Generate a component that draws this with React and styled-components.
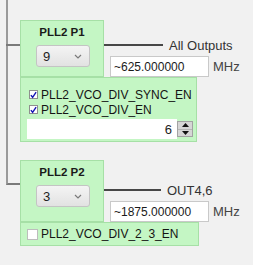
import styled, { createGlobalStyle } from "styled-components";

/* ================= STYLES ================= */

const GlobalStyle = createGlobalStyle`
  html, body {
    margin: 0;
    padding: 0;
    background: #f1f1f1;
  }
  body {
    font-family: "Liberation Sans", Arial, sans-serif;
    color: #1c1c1c;
  }
`;

const Page = styled.div`
  width: 253px;
  height: 265px;
  overflow: hidden;
  box-sizing: border-box;
  padding-left: 6px;
  display: flex;
  flex-direction: column;
`;

const Section = styled.div`
  display: flex;
`;

const Stem = styled.div`
  width: 14px;
  flex: none;
  box-sizing: border-box;
  border-left: ${(p) => (p.$last ? "none" : "2px solid #9a9a9a")};
`;

const Elbow = styled.div`
  height: ${(p) => p.$at}px;
  box-sizing: border-box;
  margin-left: ${(p) => (p.$last ? 0 : -2)}px;
  border-bottom: 2px solid #7a7a7a;
  border-left: ${(p) => (p.$last ? "2px solid #9a9a9a" : "none")};
`;

const Content = styled.div`
  display: flex;
  flex-direction: column;
  padding-top: ${(p) => p.$top || 0}px;
  padding-bottom: ${(p) => p.$bottom || 0}px;
`;

const PRow = styled.div`
  display: flex;
`;

const PBox = styled.div`
  width: 84px;
  height: ${(p) => p.$h}px;
  box-sizing: border-box;
  background: #c4f6c4;
  border: 1px solid #a6e0a6;
  display: flex;
  flex-direction: column;
  align-items: center;
  padding-top: 4px;
`;

const PTitle = styled.div`
  font-weight: bold;
  font-size: 11.5px;
  line-height: 14px;
  color: #1a1a1a;
`;

const SelectBox = styled.div`
  margin-top: 6px;
  margin-left: 2px;
  width: 54px;
  height: 22px;
  box-sizing: border-box;
  display: flex;
  align-items: center;
  justify-content: space-between;
  padding: 0 7px 0 6px;
  background: linear-gradient(#f4f4f4, #e2e2e2);
  border: 1px solid #c4c4c4;
  border-radius: 3px;
  font-size: 13px;
  color: #222;
`;

const RightCol = styled.div`
  display: flex;
  flex-direction: column;
  justify-content: flex-end;
`;

const LabelRow = styled.div`
  display: flex;
  align-items: center;
  height: 18px;
`;

const Line = styled.div`
  width: ${(p) => p.$w}px;
  height: 2px;
  background: #474747;
`;

const OutLabel = styled.span`
  margin-left: 6px;
  font-size: 13px;
  color: #333;
  white-space: nowrap;
`;

const InputRow = styled.div`
  display: flex;
  align-items: center;
  margin-top: 2px;
  margin-left: 6px;
`;

const TextInput = styled.input`
  width: 99px;
  height: 21px;
  box-sizing: border-box;
  margin: 0;
  border: 1px solid #c9c9c9;
  background: #fff;
  padding: 0 3px;
  font-family: "Liberation Sans", Arial, sans-serif;
  font-size: 12px;
  color: #1a1a1a;
  outline: none;
`;

const Unit = styled.span`
  margin-left: 4px;
  font-size: 13px;
  color: #444;
`;

const Group = styled.div`
  width: ${(p) => p.$w}px;
  box-sizing: border-box;
  background: #c4f6c4;
  border: 1px solid #a6e0a6;
  padding: ${(p) => p.$pad};
  display: flex;
  flex-direction: column;
  justify-content: center;
  height: ${(p) => (p.$h ? `${p.$h}px` : "auto")};
`;

const CheckRow = styled.div`
  display: flex;
  align-items: center;
  height: 15px;
`;

const CheckSquare = styled.span`
  width: ${(p) => p.$size}px;
  height: ${(p) => p.$size}px;
  margin-left: ${(p) => p.$ml}px;
  box-sizing: border-box;
  flex: none;
  background: #fff;
  border: 1px solid ${(p) => (p.$checked ? "#8f8f8f" : "#bdbdbd")};
  display: flex;
  align-items: center;
  justify-content: center;
`;

const CheckLabel = styled.span`
  margin-left: 3px;
  font-size: 12px;
  color: #141414;
  white-space: nowrap;
`;

const NumberField = styled.div`
  display: flex;
  align-items: center;
  margin-top: 2px;
  height: 20px;
`;

const NumValue = styled.div`
  width: 151px;
  height: 20px;
  box-sizing: border-box;
  background: #fff;
  display: flex;
  align-items: center;
  justify-content: flex-end;
  padding-right: 5px;
  font-size: 13px;
  color: #222;
`;

const Spinner = styled.div`
  width: 16px;
  height: 16px;
  box-sizing: border-box;
  border: 1px solid #a3a3a3;
  background: #d6d6d6;
  display: flex;
  flex-direction: column;
`;

const SpinHalf = styled.div`
  flex: 1;
  display: flex;
  align-items: center;
  justify-content: center;
  border-top: ${(p) => (p.$down ? "1px solid #b5b5b5" : "none")};
`;

/* ================= PARTS ================= */

function Chevron() {
  return (
    <svg width="8" height="5" viewBox="0 0 8 5">
      <path d="M1 1 L4 4 L7 1" fill="none" stroke="#7a7a7a" strokeWidth="1.2" />
    </svg>
  );
}

function Check({ checked, size = 9, ml = 2 }) {
  return (
    <CheckSquare $checked={checked} $size={size} $ml={ml}>
      {checked && (
        <svg width="8" height="8" viewBox="0 0 8 8">
          <path d="M1 4.2 L3 6.6 L7 0.8" fill="none" stroke="#1414b4" strokeWidth="1.6" />
        </svg>
      )}
    </CheckSquare>
  );
}

function Tri({ down }) {
  return (
    <svg width="7" height="4" viewBox="0 0 7 4">
      <path d={down ? "M0 0 L7 0 L3.5 4 Z" : "M0 4 L7 4 L3.5 0 Z"} fill="#111" />
    </svg>
  );
}

function Divider({ title, value, height, line, label, freq }) {
  return (
    <PRow>
      <PBox $h={height}>
        <PTitle>{title}</PTitle>
        <SelectBox>
          <span>{value}</span>
          <Chevron />
        </SelectBox>
      </PBox>
      <RightCol>
        <LabelRow>
          <Line $w={line} />
          <OutLabel>{label}</OutLabel>
        </LabelRow>
        <InputRow>
          <TextInput readOnly value={freq} />
          <Unit>MHz</Unit>
        </InputRow>
      </RightCol>
    </PRow>
  );
}

/* ================= COMPONENT ================= */

export default function App() {
  return (
    <>
      <GlobalStyle />
      <Page>
        <Section>
          <Stem>
            <Elbow $at={46} />
          </Stem>
          <Content $top={20} $bottom={18}>
            <Divider
              title="PLL2 P1"
              value="9"
              height={57}
              line={59}
              label="All Outputs"
              freq="~625.000000"
            />
            <Group $w={177} $pad="9px 3px 2px 6px">
              <CheckRow>
                <Check checked />
                <CheckLabel>PLL2_VCO_DIV_SYNC_EN</CheckLabel>
              </CheckRow>
              <CheckRow>
                <Check checked />
                <CheckLabel>PLL2_VCO_DIV_EN</CheckLabel>
              </CheckRow>
              <NumberField>
                <NumValue>6</NumValue>
                <Spinner>
                  <SpinHalf>
                    <Tri />
                  </SpinHalf>
                  <SpinHalf $down>
                    <Tri down />
                  </SpinHalf>
                </Spinner>
              </NumberField>
            </Group>
          </Content>
        </Section>
        <Section>
          <Stem $last>
            <Elbow $last $at={25} />
          </Stem>
          <Content>
            <Divider
              title="PLL2 P2"
              value="3"
              height={62}
              line={57}
              label="OUT4,6"
              freq="~1875.000000"
            />
            <Group $w={179} $h={24} $pad="0 3px 0 6px">
              <CheckRow>
                <Check size={11} ml={0} />
                <CheckLabel>PLL2_VCO_DIV_2_3_EN</CheckLabel>
              </CheckRow>
            </Group>
          </Content>
        </Section>
      </Page>
    </>
  );
}
